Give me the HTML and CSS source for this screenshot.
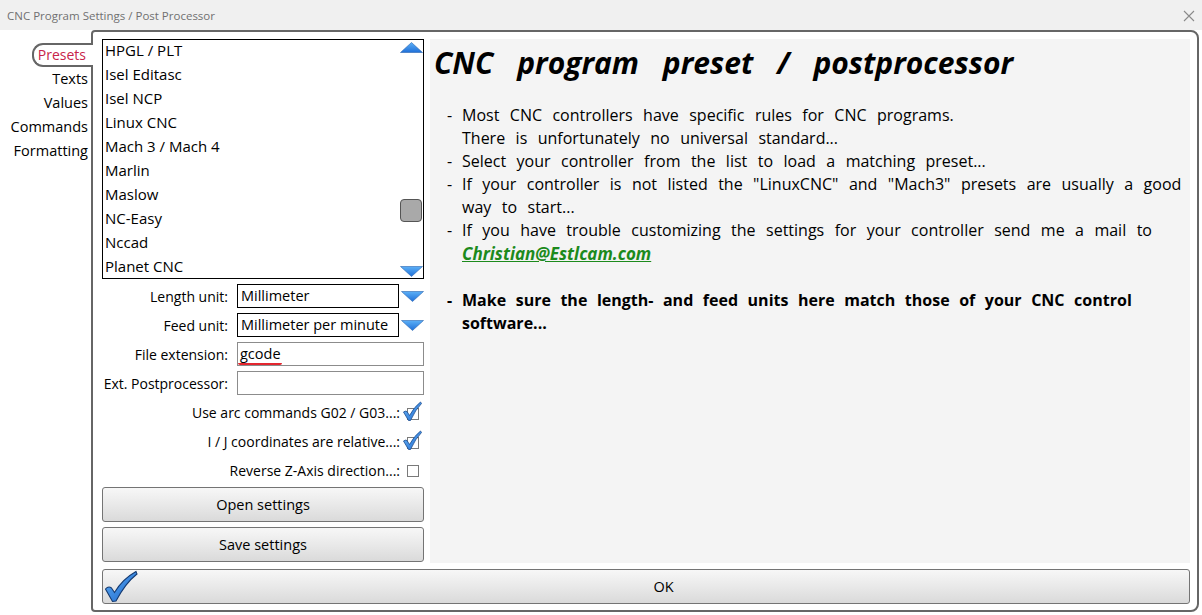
FILE: index.html
```html
<!DOCTYPE html>
<html>
<head>
<meta charset="utf-8">
<link rel="stylesheet" href="styles.css">
</head>
<body>
<header class="titlebar">
  <span class="title">CNC Program Settings / Post Processor</span>
  <svg class="close" width="12" height="12" viewBox="0 0 12 12"><path d="M1 1 L11 11 M11 1 L1 11" stroke="#8a8a8a" stroke-width="1.1" fill="none"/></svg>
</header>
<div class="main">
  <nav class="tabs">
    <div class="tab active">Presets</div>
    <div class="tab">Texts</div>
    <div class="tab">Values</div>
    <div class="tab">Commands</div>
    <div class="tab">Formatting</div>
  </nav>
  <section class="panel">
    <div class="left">
      <div class="listbox">
        <ul class="items">
          <li>HPGL / PLT</li>
          <li>Isel Editasc</li>
          <li>Isel NCP</li>
          <li>Linux CNC</li>
          <li>Mach 3 / Mach 4</li>
          <li>Marlin</li>
          <li>Maslow</li>
          <li>NC-Easy</li>
          <li>Nccad</li>
          <li>Planet CNC</li>
        </ul>
        <div class="scroll">
          <svg class="arrow" width="23" height="11" viewBox="0 0 23 11"><defs><linearGradient id="gu" x1="0" y1="0" x2="0" y2="1"><stop offset="0" stop-color="#5cb0f7"/><stop offset="1" stop-color="#1f6fd8"/></linearGradient></defs><polygon points="11.5,0.5 22.5,10.5 0.5,10.5" fill="url(#gu)" stroke="#2a64b0" stroke-width="0.6"/></svg>
          <div class="thumb"></div>
          <svg class="arrow down" width="23" height="11" viewBox="0 0 23 11"><defs><linearGradient id="gd" x1="0" y1="0" x2="0" y2="1"><stop offset="0" stop-color="#5cb0f7"/><stop offset="1" stop-color="#1f6fd8"/></linearGradient></defs><polygon points="0.5,0.5 22.5,0.5 11.5,10.5" fill="url(#gd)" stroke="#2a64b0" stroke-width="0.6"/></svg>
        </div>
      </div>

      <div class="field">
        <span class="label">Length unit:</span>
        <div class="box dark">Millimeter</div>
        <svg class="drop" width="23" height="11" viewBox="0 0 23 11"><defs><linearGradient id="g1" x1="0" y1="0" x2="0" y2="1"><stop offset="0" stop-color="#5cb0f7"/><stop offset="1" stop-color="#1f6fd8"/></linearGradient></defs><polygon points="0.5,0.5 22.5,0.5 11.5,10.5" fill="url(#g1)" stroke="#2a64b0" stroke-width="0.6"/></svg>
      </div>
      <div class="field">
        <span class="label">Feed unit:</span>
        <div class="box dark">Millimeter per minute</div>
        <svg class="drop" width="23" height="11" viewBox="0 0 23 11"><defs><linearGradient id="g2" x1="0" y1="0" x2="0" y2="1"><stop offset="0" stop-color="#5cb0f7"/><stop offset="1" stop-color="#1f6fd8"/></linearGradient></defs><polygon points="0.5,0.5 22.5,0.5 11.5,10.5" fill="url(#g2)" stroke="#2a64b0" stroke-width="0.6"/></svg>
      </div>
      <div class="field wide">
        <span class="label">File extension:</span>
        <div class="box"><span class="spell">gcode</span></div>
      </div>
      <div class="field wide">
        <span class="label">Ext. Postprocessor:</span>
        <div class="box"></div>
      </div>

      <div class="check">
        <span>Use arc commands G02 / G03...:</span>
        <svg width="20" height="22" viewBox="0 0 20 22"><defs><linearGradient id="c1" x1="0" y1="0" x2="1" y2="1"><stop offset="0" stop-color="#6db8f8"/><stop offset="1" stop-color="#1c68cf"/></linearGradient></defs><rect x="5.5" y="8.5" width="11" height="11" fill="#fff" stroke="#7a7a7a"/><path d="M1.5 12 Q3.5 10.5 5 11.5 L7.5 15.5 Q12 7 18.5 2 L19.5 3.5 Q13.5 9.5 8.5 20.5 L6.5 20.5 Z" fill="url(#c1)" stroke="#1b4a8c" stroke-width="0.8"/></svg>
      </div>
      <div class="check">
        <span>I / J coordinates are relative...:</span>
        <svg width="20" height="22" viewBox="0 0 20 22"><defs><linearGradient id="c2" x1="0" y1="0" x2="1" y2="1"><stop offset="0" stop-color="#6db8f8"/><stop offset="1" stop-color="#1c68cf"/></linearGradient></defs><rect x="5.5" y="8.5" width="11" height="11" fill="#fff" stroke="#7a7a7a"/><path d="M1.5 12 Q3.5 10.5 5 11.5 L7.5 15.5 Q12 7 18.5 2 L19.5 3.5 Q13.5 9.5 8.5 20.5 L6.5 20.5 Z" fill="url(#c2)" stroke="#1b4a8c" stroke-width="0.8"/></svg>
      </div>
      <div class="check">
        <span>Reverse Z-Axis direction...:</span>
        <svg width="20" height="22" viewBox="0 0 20 22"><rect x="5.5" y="7.5" width="11" height="11" fill="#fff" stroke="#7a7a7a"/></svg>
      </div>

      <button class="btn">Open settings</button>
      <button class="btn">Save settings</button>
    </div>

    <div class="info">
      <h1>CNC program preset / postprocessor</h1>
      <div class="para"><span class="dash">-</span><p>Most CNC controllers have specific rules for CNC programs.<br>There is unfortunately no universal standard...</p></div>
      <div class="para"><span class="dash">-</span><p>Select your controller from the list to load a matching preset...</p></div>
      <div class="para"><span class="dash">-</span><p>If your controller is not listed the "LinuxCNC" and "Mach3" presets are usually a good<br>way to start...</p></div>
      <div class="para"><span class="dash">-</span><p>If you have trouble customizing the settings for your controller send me a mail to<br><a class="mail">Christian@Estlcam.com</a></p></div>
      <div class="para gap bold"><span class="dash">-</span><p>Make sure the length- and feed units here match those of your CNC control<br>software...</p></div>
    </div>

    <button class="btn ok">
      <svg class="okcheck" width="34" height="33" viewBox="0 0 34 33"><defs><linearGradient id="ok" x1="0" y1="0" x2="1" y2="1"><stop offset="0" stop-color="#5fb0f6"/><stop offset="1" stop-color="#1a62c8"/></linearGradient></defs><path d="M1.5 19 Q4.5 15.5 7.5 18 L10.5 22.5 Q18.5 9 32 1.5 L33 4 Q21.5 13 12 31 L8.5 31.5 Z" fill="url(#ok)" stroke="#153a70" stroke-width="1.1"/></svg>
      <span>OK</span>
    </button>
  </section>
</div>
</body>
</html>
```
FILE: styles.css
```css
html, body {
  margin: 0;
  padding: 0;
}
body {
  width: 1202px;
  height: 615px;
  overflow: hidden;
  background: #fff;
  font-family: "Open Sans", "Noto Sans", sans-serif;
  color: #000;
}
.titlebar {
  height: 30px;
  box-sizing: border-box;
  background: #f0f0f0;
  display: flex;
  align-items: center;
  justify-content: space-between;
  padding: 0 7px 0 7px;
}
.title {
  font-size: 11.5px;
  color: #707070;
}
.close {
  margin-top: 1px;
}
.main {
  display: flex;
  height: 585px;
}
.tabs {
  width: 91px;
  flex: none;
  box-sizing: border-box;
  display: flex;
  flex-direction: column;
  align-items: flex-end;
  padding-top: 13px;
  font-size: 14.5px;
}
.tab {
  height: 24px;
  line-height: 24px;
  padding-right: 3px;
}
.tab.active {
  position: relative;
  z-index: 1;
  width: 61px;
  box-sizing: border-box;
  margin-right: -2px;
  border: 2px solid #666;
  border-right: none;
  border-radius: 11px 0 0 11px;
  background: #fff;
  color: #c8234a;
  text-align: right;
  line-height: 20px;
  padding-right: 7px;
  font-size: 14px;
}
.panel {
  flex: 1;
  margin: 0 3px 3px 0;
  border: 2px solid #666;
  border-radius: 4px 8px 8px 4px;
  padding: 7px 7px 6px 9px;
  display: grid;
  grid-template-columns: 322px 1fr;
  grid-template-rows: 1fr 35px;
  column-gap: 6px;
  row-gap: 6px;
  min-height: 0;
}
.left {
  display: flex;
  flex-direction: column;
  gap: 5px;
  font-size: 14px;
}
.listbox {
  height: 240px;
  box-sizing: border-box;
  border: 1px solid #000;
  display: flex;
  overflow: hidden;
  background: #fff;
}
.items {
  list-style: none;
  margin: -2px 0 0 0;
  padding: 0 0 0 2px;
  flex: 1;
  font-size: 15px;
}
.items li {
  height: 24px;
  line-height: 24px;
  white-space: nowrap;
}
.scroll {
  width: 23px;
  display: flex;
  flex-direction: column;
  padding: 2px 0 1px 0;
}
.arrow {
  display: block;
}
.thumb {
  width: 20px;
  height: 21px;
  margin-top: 146px;
  background: #a9a9a9;
  border: 1px solid #555;
  border-radius: 4px;
}
.arrow.down {
  margin-top: auto;
}
.field {
  display: flex;
  align-items: center;
  height: 24px;
}
.label {
  width: 126px;
  text-align: right;
  margin-right: 9px;
  white-space: nowrap;
}
.box {
  width: 162px;
  height: 24px;
  box-sizing: border-box;
  border: 1px solid #8c8c8c;
  background: #fff;
  padding-left: 3px;
  line-height: 22px;
  white-space: nowrap;
  overflow: hidden;
  font-size: 14.5px;
}
.box.dark {
  border-color: #000;
}
.field.wide .box {
  width: 187px;
}
.drop {
  margin-left: 2px;
  margin-top: 1px;
}
.spell {
  display: inline-block;
  line-height: 19px;
  border-bottom: 2.5px solid #e3262f;
  border-radius: 2px;
  margin-left: -3px;
  padding: 0 1px 0 2px;
}
.check {
  height: 24px;
  display: flex;
  align-items: center;
  justify-content: flex-end;
  gap: 2px;
  padding-right: 2px;
}
.check svg {
  display: block;
  margin-top: -2px;
}
.btn {
  font-family: inherit;
  font-size: 14.5px;
  color: #000;
  height: 35px;
  border: 1px solid #747474;
  border-radius: 3px;
  background: linear-gradient(#f7f7f7, #e9e9e9 50%, #dadada);
  padding: 0;
  flex: none;
}
.info {
  background: #f4f4f4;
  padding: 6px 8px 0 4px;
  min-height: 0;
}
h1 {
  margin: 0 0 23px 0;
  font-size: 30px;
  line-height: 36px;
  font-weight: 700;
  font-style: italic;
  word-spacing: 16px;
  white-space: nowrap;
}
.para {
  display: flex;
  padding-left: 13px;
  font-size: 16px;
  line-height: 23px;
}
.para.gap {
  margin-top: 23px;
}
.para.bold {
  font-weight: 700;
}
.dash {
  width: 15px;
  flex: none;
}
.para p {
  margin: 0;
  white-space: nowrap;
  word-spacing: 6.3px;
}
.para.bold p {
  word-spacing: 5.4px;
}
.mail {
  color: #1c8a1c;
  font-weight: 700;
  font-style: italic;
  font-size: 17px;
  text-decoration: underline;
  word-spacing: 0;
}
.btn.ok {
  grid-column: 1 / 3;
  display: flex;
  align-items: center;
}
.okcheck {
  margin-left: 1px;
  flex: none;
}
.btn.ok span {
  flex: 1;
  text-align: center;
}
```
